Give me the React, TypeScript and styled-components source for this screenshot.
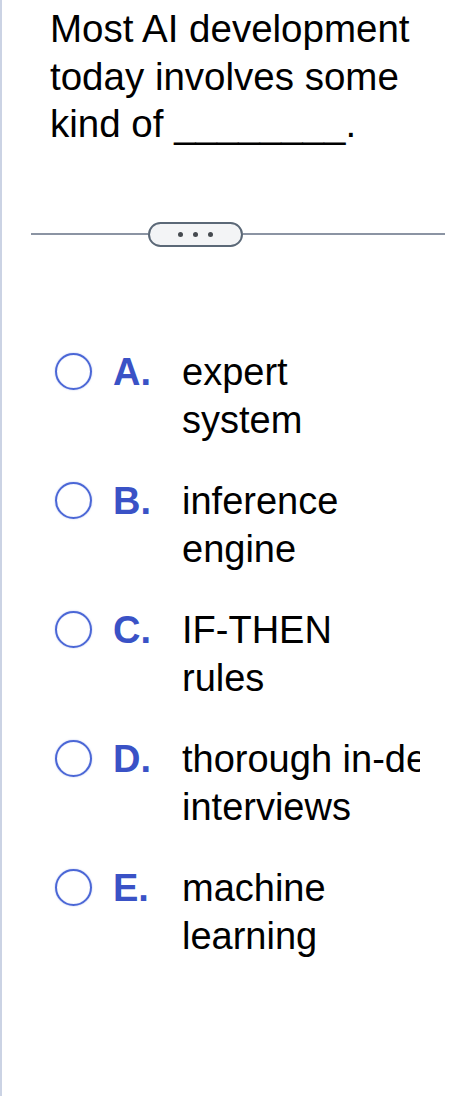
import styled, { createGlobalStyle } from "styled-components"

const GlobalStyle = createGlobalStyle`
    html, body {
        margin: 0;
        padding: 0;
        background: #ffffff;
        font-family: "Liberation Sans", Arial, Helvetica, sans-serif;
    }
`

const Page = styled.div`
    min-height: 1096px;
    box-sizing: border-box;
    border-left: 2px solid #cbd3e4;
    background: #ffffff;
    overflow: hidden;
`

const Question = styled.p`
    margin: 0;
    padding: 5px 0 0 48px;
    max-width: 380px;
    font-size: 38.5px;
    line-height: 47.5px;
    color: #000000;
`

const DividerRow = styled.div`
    display: flex;
    align-items: center;
    margin-top: 74px;
    padding: 0 30px 0 29px;
    height: 25px;
`

const Line = styled.div<{ $fixed?: number }>`
    height: 2px;
    background: #8b94a3;
    flex: ${({ $fixed }) => ($fixed ? `0 0 ${$fixed}px` : "1 1 auto")};
`

const MoreButton = styled.button`
    box-sizing: border-box;
    width: 95px;
    height: 25px;
    padding: 0;
    border: 2.5px solid #5b6877;
    border-radius: 13px;
    background: #f3f4f6;
    display: flex;
    align-items: center;
    justify-content: center;
    gap: 10px;
    cursor: pointer;

    & span {
        width: 5px;
        height: 5px;
        border-radius: 50%;
        background: #454a50;
    }
`

const Options = styled.div`
    display: flex;
    flex-direction: column;
    gap: 33px;
    margin-top: 101px;
`

const OptionRow = styled.label`
    display: flex;
    align-items: flex-start;
    padding-left: 53px;
    cursor: pointer;
`

const Radio = styled.span`
    box-sizing: border-box;
    flex: 0 0 37px;
    width: 37px;
    height: 37px;
    margin-top: 5.5px;
    border-radius: 50%;
    border: 2.5px solid #4b67d6;
    box-shadow: 0 0 1.5px rgba(75, 103, 214, 0.55), inset 0 0 1px rgba(75, 103, 214, 0.4);
`

const Letter = styled.span`
    flex: 0 0 69px;
    margin-left: 21px;
    font-size: 38px;
    line-height: 48px;
    font-weight: 700;
    color: #3a52c6;
`

const Answer = styled.div`
    width: 238px;
    overflow: hidden;
    font-size: 38px;
    line-height: 48px;
    color: #000000;

    & span {
        display: block;
        white-space: nowrap;
    }
`

const choices = [
    { letter: "A.", lines: ["expert", "system"] },
    { letter: "B.", lines: ["inference", "engine"] },
    { letter: "C.", lines: ["IF-THEN", "rules"] },
    { letter: "D.", lines: ["thorough in-depth", "interviews"] },
    { letter: "E.", lines: ["machine", "learning"] },
]

const App = () => {
    return (
        <Page>
            <GlobalStyle />
            <Question>Most AI development today involves some kind of ________.</Question>

            <DividerRow>
                <Line $fixed={117} />
                <MoreButton aria-label="more">
                    <span />
                    <span />
                    <span />
                </MoreButton>
                <Line />
            </DividerRow>

            <Options>
                {choices.map((choice) => (
                    <OptionRow key={choice.letter}>
                        <Radio />
                        <Letter>{choice.letter}</Letter>
                        <Answer>
                            {choice.lines.map((line) => (
                                <span key={line}>{line}</span>
                            ))}
                        </Answer>
                    </OptionRow>
                ))}
            </Options>
        </Page>
    )
}

export default App
